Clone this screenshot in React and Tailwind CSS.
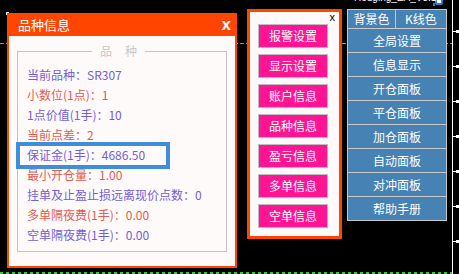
import React from "react";

const lines = [
  { t: "当前品种：SR307", c: "text-[#6f5fd8]" },
  { t: "小数位(1点)：1", c: "text-[#e35a4f]" },
  { t: "1点价值(1手)：10", c: "text-[#6f5fd8]" },
  { t: "当前点差：2", c: "text-[#e35a4f]" },
  { t: "保证金(1手)：4686.50", c: "text-[#6f5fd8]" },
  { t: "最小开仓量：1.00", c: "text-[#e35a4f]" },
  { t: "挂单及止盈止损远离现价点数：0", c: "text-[#6f5fd8]" },
  { t: "多单隔夜费(1手)：0.00", c: "text-[#e35a4f]" },
  { t: "空单隔夜费(1手)：0.00", c: "text-[#6f5fd8]" },
];

const pinkButtons = ["报警设置", "显示设置", "账户信息", "品种信息", "盈亏信息", "多单信息", "空单信息"];
const blueButtons = ["全局设置", "信息显示", "开仓面板", "平仓面板", "加仓面板", "自动面板", "对冲面板", "帮助手册"];
const ticks = [31, 66, 101, 136, 171, 206, 241];

export default function App() {
  return (
    <div className="relative w-[459px] h-[274px] bg-black overflow-hidden font-['Noto_Sans_CJK_SC',sans-serif]">
      {/* chart drawing layer */}
      <svg className="absolute inset-0" width="459" height="274">
        <line x1="0" y1="43.5" x2="452" y2="43.5" stroke="#32cd32" strokeWidth="1" strokeDasharray="4 2" />
        <line x1="0" y1="273" x2="452" y2="273" stroke="#32cd32" strokeWidth="2" strokeDasharray="3 3" />
        <line x1="452.5" y1="0" x2="452.5" y2="274" stroke="#ffffff" strokeWidth="1" />
        {ticks.map((y) => (
          <g key={y}>
            <rect x="452" y={y} width="4" height="1" fill="#fff" />
            <rect x="456" y={y - 1} width="3" height="3" fill="#fff" />
          </g>
        ))}
        <path d="M6.5 15 V12.5 H9" stroke="#fff" strokeWidth="1" fill="none" />
        <rect x="435" y="-3" width="8" height="8" rx="2" fill="#2f7fd0" />
        <rect x="437" y="-1" width="4" height="4" fill="#ffffff" />
        <rect x="433" y="3" width="2" height="3" fill="#2f7fd0" />
      </svg>

      <div className="absolute left-[354px] top-[-7px] text-[10px] leading-[10px] text-white font-['Liberation_Sans',sans-serif] whitespace-nowrap">
        Hedging_EA_V3.1
      </div>

      <div className="relative flex items-start pl-[7px]">
        {/* Left info panel */}
        <div className="mt-[13px] w-[230px] h-[255px] bg-[#ff4500] px-[2px] pb-[2px] flex flex-col">
          <div className="h-[23px] flex items-center justify-between pl-[9px] pr-[4px]">
            <span className="text-white text-[13px] leading-[13px]">品种信息</span>
            <span className="text-white text-[17px] leading-[14px] font-bold font-['Liberation_Sans',sans-serif]">x</span>
          </div>
          <div className="flex-1 bg-[#fffafa] px-[8px] pt-[15px] pb-[14px]">
            <div className="relative h-full border border-[#c4c4c4] pt-[13px] pl-[9px]">
              <div className="absolute left-[74px] top-[-9px] h-[16px] bg-[#fffafa] px-[8px] flex gap-[13px] text-[12px] leading-[16px] text-[#c8c8c8]">
                <span>品</span>
                <span>种</span>
              </div>
              {lines.map((l) => (
                <div key={l.t} className={`h-[20px] text-[12px] leading-[20px] whitespace-nowrap ${l.c}`}>
                  {l.t}
                </div>
              ))}
            </div>
          </div>
        </div>

        {/* Middle button panel */}
        <div className="relative ml-[10px] mt-[9px] w-[95px] h-[230px] border-[3px] border-[#ff4500] bg-[#fffafa] flex flex-col gap-[6px] pt-[12px] pl-[8px]">
          <span className="absolute right-[4px] top-[0px] text-[11px] leading-[11px] text-black font-['Liberation_Sans',sans-serif]">x</span>
          {pinkButtons.map((b) => (
            <div key={b} className="w-[70px] h-[24px] bg-[#ff1493] border border-[#bdbdbd] text-white text-[12px] flex items-center justify-center">
              {b}
            </div>
          ))}
        </div>

        {/* Right blue button column */}
        <div className="ml-[5px] mt-[9px] w-[100px] flex flex-col border-t border-[#c8c8c8]">
          <div className="flex h-[19px]">
            <div className="w-[49px] bg-[#4682b4] border-l border-b border-r border-[#c8c8c8] text-white text-[12px] flex items-center justify-center">背景色</div>
            <div className="flex-1 bg-[#4682b4] border-b border-r border-[#c8c8c8] text-white text-[12px] flex items-center justify-center">K线色</div>
          </div>
          {blueButtons.map((b) => (
            <div key={b} className="h-[24px] bg-[#4682b4] border-l border-r border-b border-[#c8c8c8] text-white text-[12px] flex items-center justify-center">
              {b}
            </div>
          ))}
        </div>
      </div>

      {/* highlight annotation */}
      <div className="absolute left-[16px] top-[142px] w-[154px] h-[27px] border-[4px] border-[#3d8edb]" />
    </div>
  );
}
